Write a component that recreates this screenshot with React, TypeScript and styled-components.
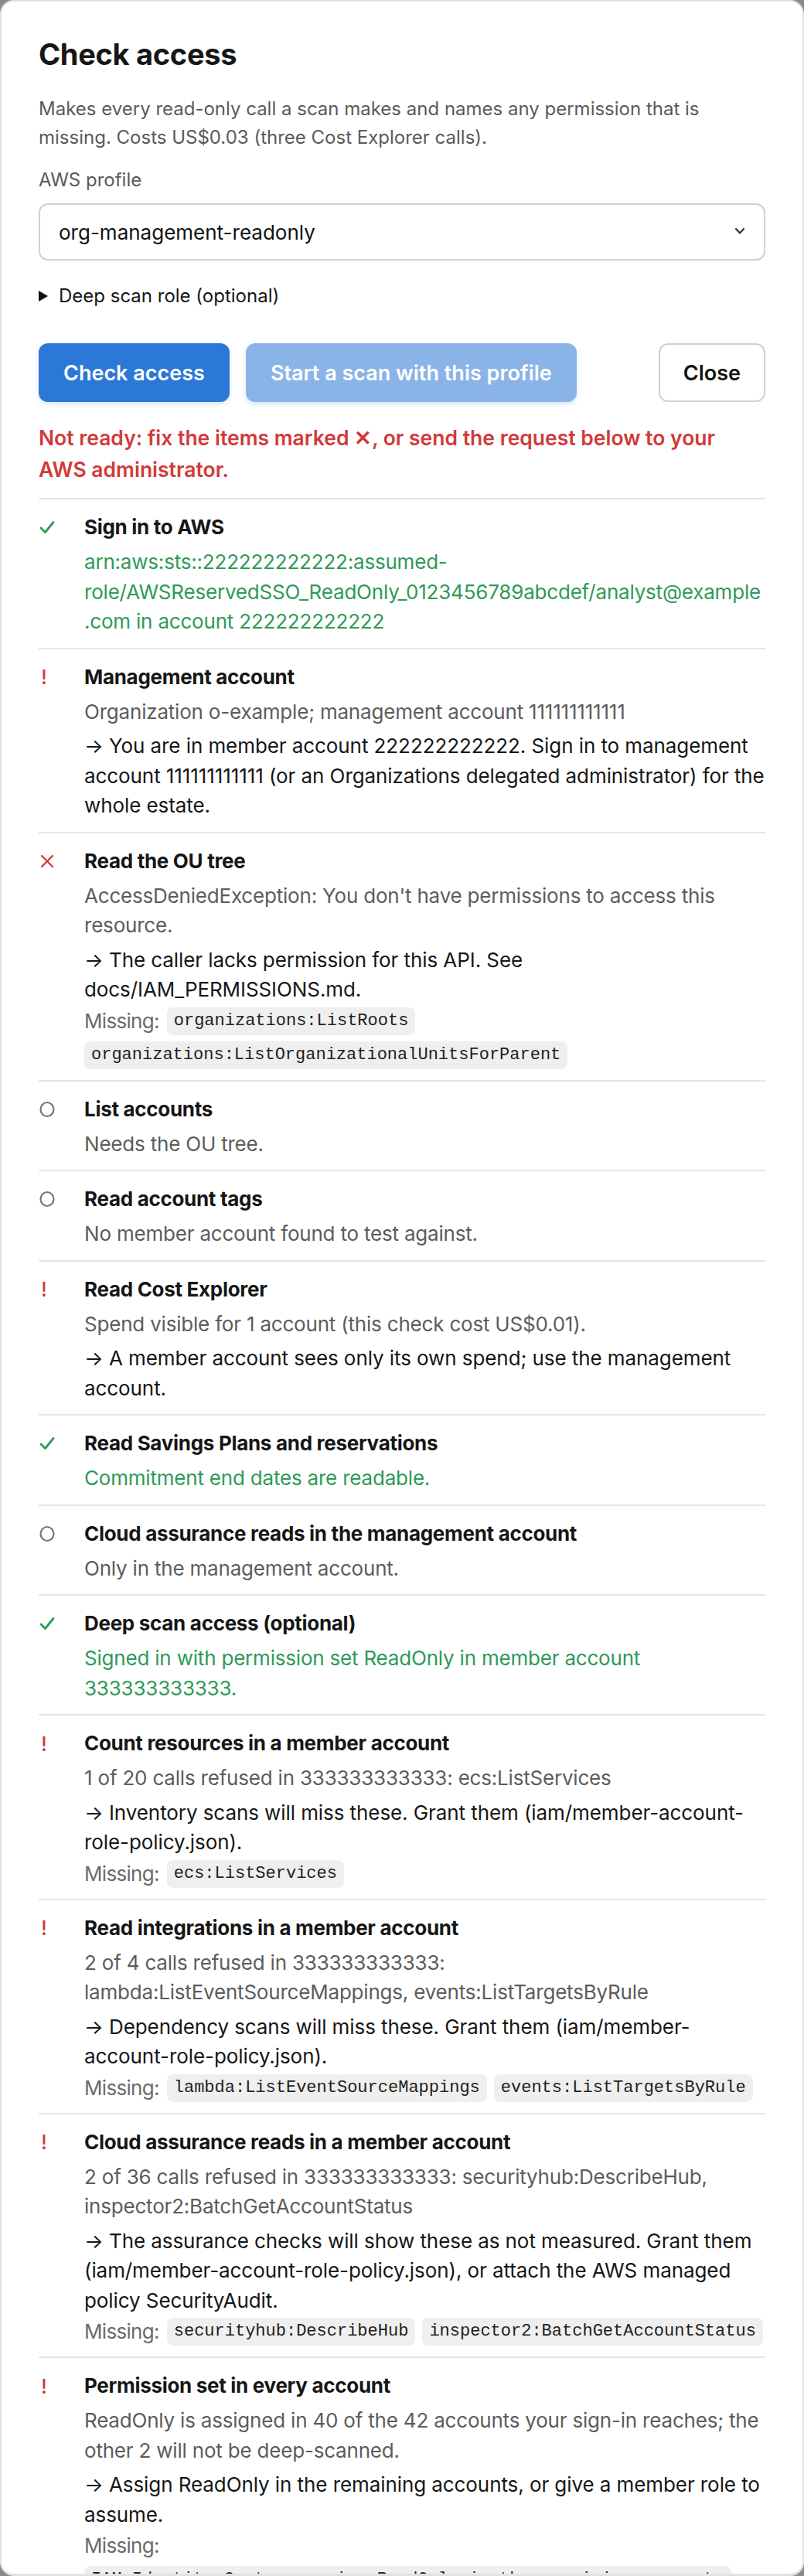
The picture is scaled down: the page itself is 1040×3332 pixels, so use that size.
import styled, { createGlobalStyle } from "styled-components";

const GlobalStyle = createGlobalStyle`
  html, body {
    margin: 0;
    padding: 0;
    background: #8a8a8a;
  }
  body {
    font-family: "Inter", "Noto Sans", sans-serif;
    -webkit-font-smoothing: antialiased;
  }
  * {
    box-sizing: border-box;
  }
`;

const Backdrop = styled.div`
  width: 1040px;
  height: 3332px;
`;

const Dialog = styled.section`
  height: 100%;
  background: #ffffff;
  border: 2px solid #e2e2e2;
  border-bottom-width: 3px;
  border-radius: 18px;
  overflow: hidden;
  padding: 45px 48px 0;
  color: #161616;
`;

const Title = styled.h2`
  margin: 0;
  font-size: 38px;
  line-height: 46px;
  font-weight: 700;
  letter-spacing: -0.3px;
`;

const Lead = styled.p`
  margin: 29px 0 0;
  font-size: 24px;
  line-height: 37px;
  color: #5a5a5a;
`;

const FieldLabel = styled.label`
  display: block;
  margin-top: 19px;
  font-size: 24px;
  line-height: 36px;
  color: #5a5a5a;
`;

const SelectWrap = styled.div`
  position: relative;
  margin-top: 12px;
`;

const Select = styled.select`
  appearance: none;
  width: 100%;
  height: 74px;
  padding: 0 60px 0 24px;
  border: 2px solid #d3d0ca;
  border-radius: 12px;
  background: #ffffff;
  font-family: inherit;
  font-size: 26px;
  color: #111;
`;

const Chevron = styled.svg`
  position: absolute;
  right: 26px;
  top: 31px;
  pointer-events: none;
`;

const Disclosure = styled.details`
  margin-top: 28px;
`;

const Summary = styled.summary`
  display: flex;
  align-items: center;
  gap: 14px;
  list-style: none;
  font-size: 24px;
  line-height: 36px;
  color: #161616;
  cursor: pointer;

  &::-webkit-details-marker {
    display: none;
  }
`;

const ButtonRow = styled.div`
  display: flex;
  align-items: center;
  gap: 21px;
  margin-top: 43px;
`;

const Button = styled.button<{ $variant: "primary" | "muted" | "plain" }>`
  height: 76px;
  padding: 0 30px;
  border-radius: 12px;
  font-family: inherit;
  font-size: 27px;
  font-weight: 600;
  cursor: pointer;
  border: 2px solid
    ${(p) => (p.$variant === "plain" ? "#d3d0ca" : "transparent")};
  background: ${(p) =>
    p.$variant === "primary"
      ? "#2b78d6"
      : p.$variant === "muted"
      ? "#8ab4e7"
      : "#ffffff"};
  color: ${(p) => (p.$variant === "plain" ? "#111" : "#ffffff")};
  box-shadow: ${(p) =>
    p.$variant === "plain" ? "none" : "0 3px 6px rgba(43, 120, 214, 0.18)"};
  margin-left: ${(p) => (p.$variant === "plain" ? "auto" : "0")};
`;

const Verdict = styled.p`
  margin: 26px 0 0;
  font-size: 26.5px;
  line-height: 41px;
  font-weight: 600;
  color: #d23a3a;
`;

const CheckList = styled.ul`
  list-style: none;
  margin: 16px 0 0;
  padding: 0;
`;

const CheckRow = styled.li`
  display: grid;
  grid-template-columns: 59px 1fr;
  padding: 18px 0 14px;
  border-top: 2px solid #e6e6e6;
`;

const IconCell = styled.div`
  height: 36px;
  display: flex;
  align-items: center;
`;

const Bang = styled.span`
  font-size: 26px;
  font-weight: 500;
  color: #d23a3a;
  padding-left: 3px;
`;

const Body = styled.div`
  min-width: 0;
`;

const CheckTitle = styled.div`
  font-size: 26px;
  line-height: 36px;
  font-weight: 700;
  letter-spacing: -0.3px;
  margin-bottom: 8px;
`;

const Detail = styled.div<{ $tone: "ok" | "muted" }>`
  font-size: 26px;
  line-height: 38.5px;
  letter-spacing: -0.2px;
  color: ${(p) => (p.$tone === "ok" ? "#2e9a57" : "#5c5c5c")};
  overflow-wrap: anywhere;
`;

const Action = styled.div`
  margin-top: 6px;
  font-size: 26px;
  line-height: 38.5px;
  letter-spacing: -0.08px;
  color: #161616;
`;

const Missing = styled.div`
  display: flex;
  flex-wrap: wrap;
  align-items: center;
  gap: 8px 9px;
  margin-top: 3px;
`;

const MissingLabel = styled.span`
  font-size: 26px;
  line-height: 36px;
  letter-spacing: -0.7px;
  color: #6b6b6b;
  margin-right: 1px;
`;

const Chip = styled.code`
  display: inline-block;
  padding: 5px 9px;
  border-radius: 8px;
  background: #efefef;
  font-family: "Liberation Mono", "DejaVu Sans Mono", monospace;
  font-size: 22px;
  line-height: 26px;
  color: #1e1e1e;
`;

type Status = "ok" | "warn" | "fail" | "skip";

type Check = {
  status: Status;
  title: string;
  detail: string;
  action?: string;
  missing?: string[];
};

const checks: Check[] = [
  {
    status: "ok",
    title: "Sign in to AWS",
    detail:
      "arn:aws:sts::222222222222:assumed-role/AWSReservedSSO_ReadOnly_0123456789abcdef/analyst@example.com in account 222222222222",
  },
  {
    status: "warn",
    title: "Management account",
    detail: "Organization o-example; management account 111111111111",
    action:
      "You are in member account 222222222222. Sign in to management account 111111111111 (or an Organizations delegated administrator) for the whole estate.",
  },
  {
    status: "fail",
    title: "Read the OU tree",
    detail:
      "AccessDeniedException: You don't have permissions to access this resource.",
    action:
      "The caller lacks permission for this API. See docs/IAM_PERMISSIONS.md.",
    missing: [
      "organizations:ListRoots",
      "organizations:ListOrganizationalUnitsForParent",
    ],
  },
  { status: "skip", title: "List accounts", detail: "Needs the OU tree." },
  {
    status: "skip",
    title: "Read account tags",
    detail: "No member account found to test against.",
  },
  {
    status: "warn",
    title: "Read Cost Explorer",
    detail: "Spend visible for 1 account (this check cost US$0.01).",
    action:
      "A member account sees only its own spend; use the management account.",
  },
  {
    status: "ok",
    title: "Read Savings Plans and reservations",
    detail: "Commitment end dates are readable.",
  },
  {
    status: "skip",
    title: "Cloud assurance reads in the management account",
    detail: "Only in the management account.",
  },
  {
    status: "ok",
    title: "Deep scan access (optional)",
    detail:
      "Signed in with permission set ReadOnly in member account 333333333333.",
  },
  {
    status: "warn",
    title: "Count resources in a member account",
    detail: "1 of 20 calls refused in 333333333333: ecs:ListServices",
    action:
      "Inventory scans will miss these. Grant them (iam/member-account-role-policy.json).",
    missing: ["ecs:ListServices"],
  },
  {
    status: "warn",
    title: "Read integrations in a member account",
    detail:
      "2 of 4 calls refused in 333333333333: lambda:ListEventSourceMappings, events:ListTargetsByRule",
    action:
      "Dependency scans will miss these. Grant them (iam/member-account-role-policy.json).",
    missing: ["lambda:ListEventSourceMappings", "events:ListTargetsByRule"],
  },
  {
    status: "warn",
    title: "Cloud assurance reads in a member account",
    detail:
      "2 of 36 calls refused in 333333333333: securityhub:DescribeHub, inspector2:BatchGetAccountStatus",
    action:
      "The assurance checks will show these as not measured. Grant them (iam/member-account-role-policy.json), or attach the AWS managed policy SecurityAudit.",
    missing: ["securityhub:DescribeHub", "inspector2:BatchGetAccountStatus"],
  },
  {
    status: "warn",
    title: "Permission set in every account",
    detail:
      "ReadOnly is assigned in 40 of the 42 accounts your sign-in reaches; the other 2 will not be deep-scanned.",
    action:
      "Assign ReadOnly in the remaining accounts, or give a member role to assume.",
    missing: ["IAM Identity Center: assign ReadOnly in the remaining accounts"],
  },
];

function StatusIcon({ status }: { status: Status }) {
  if (status === "ok") {
    return (
      <svg width="22" height="20" viewBox="0 0 22 20">
        <polyline
          points="3,11 8.5,16.5 19,3.5"
          fill="none"
          stroke="#2e9a57"
          strokeWidth="2.8"
          strokeLinecap="round"
          strokeLinejoin="round"
        />
      </svg>
    );
  }
  if (status === "fail") {
    return (
      <svg width="22" height="20" viewBox="0 0 22 20">
        <path
          d="M4 3 L18 17 M18 3 L4 17"
          stroke="#d23a3a"
          strokeWidth="2.4"
          strokeLinecap="round"
        />
      </svg>
    );
  }
  if (status === "skip") {
    return (
      <svg width="22" height="22" viewBox="0 0 22 22">
        <ellipse cx="11" cy="11" rx="8.5" ry="9" fill="none" stroke="#767676" strokeWidth="2.2" />
      </svg>
    );
  }
  return <Bang>!</Bang>;
}

export default function App() {
  return (
    <>
      <GlobalStyle />
      <Backdrop>
        <Dialog>
          <Title>Check access</Title>
          <Lead>
            Makes every read-only call a scan makes and names any permission
            that is missing. Costs US$0.03 (three Cost Explorer calls).
          </Lead>
          <FieldLabel htmlFor="profile">AWS profile</FieldLabel>
          <SelectWrap>
            <Select id="profile" defaultValue="org-management-readonly">
              <option>org-management-readonly</option>
            </Select>
            <Chevron width="14" height="10" viewBox="0 0 14 10">
              <polyline
                points="2,2 7,7.5 12,2"
                fill="none"
                stroke="#333"
                strokeWidth="2.2"
                strokeLinecap="round"
                strokeLinejoin="round"
              />
            </Chevron>
          </SelectWrap>
          <Disclosure>
            <Summary>
              <svg width="12" height="16" viewBox="0 0 12 16">
                <polygon points="0,1 12,8 0,15" fill="#111" />
              </svg>
              Deep scan role (optional)
            </Summary>
          </Disclosure>
          <ButtonRow>
            <Button $variant="primary">Check access</Button>
            <Button $variant="muted">Start a scan with this profile</Button>
            <Button $variant="plain">Close</Button>
          </ButtonRow>
          <Verdict>
            Not ready: fix the items marked ✕, or send the request below to
            your AWS administrator.
          </Verdict>
          <CheckList>
            {checks.map((c) => (
              <CheckRow key={c.title}>
                <IconCell>
                  <StatusIcon status={c.status} />
                </IconCell>
                <Body>
                  <CheckTitle>{c.title}</CheckTitle>
                  <Detail $tone={c.status === "ok" ? "ok" : "muted"}>
                    {c.detail}
                  </Detail>
                  {c.action && <Action>→ {c.action}</Action>}
                  {c.missing && (
                    <Missing>
                      <MissingLabel>Missing:</MissingLabel>
                      {c.missing.map((m) => (
                        <Chip key={m}>{m}</Chip>
                      ))}
                    </Missing>
                  )}
                </Body>
              </CheckRow>
            ))}
          </CheckList>
        </Dialog>
      </Backdrop>
    </>
  );
}
